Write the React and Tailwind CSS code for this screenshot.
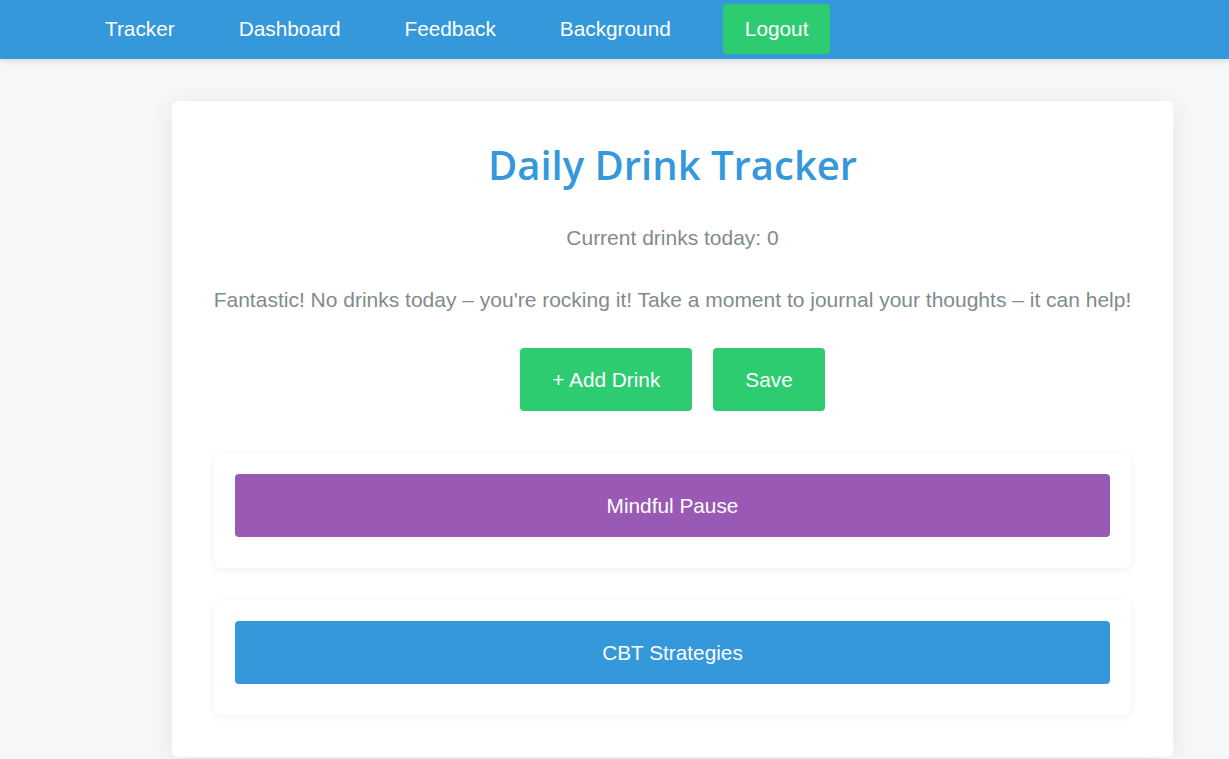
import React from "react";

const NavLink = ({ children }) => (
    <a href="#" className="px-[21px] py-[10px] text-white text-[20.8px] leading-[24px] -mt-[1px]">
        {children}
    </a>
);

const ToolSection = ({ label, color }) => (
    <div className="bg-white rounded-lg pt-[21px] px-[21px] pb-[31px] shadow-[0_2px_8px_rgba(0,0,0,0.06)]">
        <button className={`w-full h-[63px] rounded text-white text-[20.8px] ${color}`}>
            {label}
        </button>
    </div>
);

export default function App() {
    return (
        <div className="min-h-[759px] bg-[#f6f7f8]" style={{ fontFamily: '"Liberation Sans", Arial, sans-serif' }}>
            <nav className="h-[59px] bg-[#3498db] flex items-center pl-[84px] gap-[22px] shadow-[0_2px_6px_rgba(0,0,0,0.12)]">
                <NavLink>Tracker</NavLink>
                <NavLink>Dashboard</NavLink>
                <NavLink>Feedback</NavLink>
                <NavLink>Background</NavLink>
                <button className="ml-[9px] h-[50px] mt-[-1px] px-[22px] bg-[#2ecc71] rounded text-white text-[20.8px]">
                    Logout
                </button>
            </nav>

            <div className="pt-[42px]">
                <div className="ml-[172px] w-[1001px] bg-white rounded-md shadow-[0_4px_24px_rgba(40,50,90,0.09)] px-[42px] pt-[40px] pb-[42px]">
                    <h1
                        className="text-center text-[#3498db] text-[40px] font-semibold leading-[48px]"
                        style={{ fontFamily: '"Open Sans", "Noto Sans", sans-serif' }}
                    >
                        Daily Drink Tracker
                    </h1>
                    <p className="mt-[37px] text-center text-[#7f8c8d] text-[21px] leading-[24px]">
                        Current drinks today: 0
                    </p>
                    <p className="mt-[38px] -mx-[4px] text-center whitespace-nowrap text-[#7f8c8d] text-[21px] leading-[24px]">
                        Fantastic! No drinks today – you're rocking it! Take a moment to journal your thoughts – it can help!
                    </p>
                    <div className="mt-[36px] flex justify-center gap-[21px]">
                        <button className="h-[63px] px-[32px] bg-[#2ecc71] rounded text-white text-[20.8px]">
                            + Add Drink
                        </button>
                        <button className="h-[63px] px-[32px] bg-[#2ecc71] rounded text-white text-[20.8px]">
                            Save
                        </button>
                    </div>
                    <div className="mt-[42px] flex flex-col gap-[32px]">
                        <ToolSection label="Mindful Pause" color="bg-[#9b59b6]" />
                        <ToolSection label="CBT Strategies" color="bg-[#3498db]" />
                    </div>
                </div>
            </div>
        </div>
    );
}
